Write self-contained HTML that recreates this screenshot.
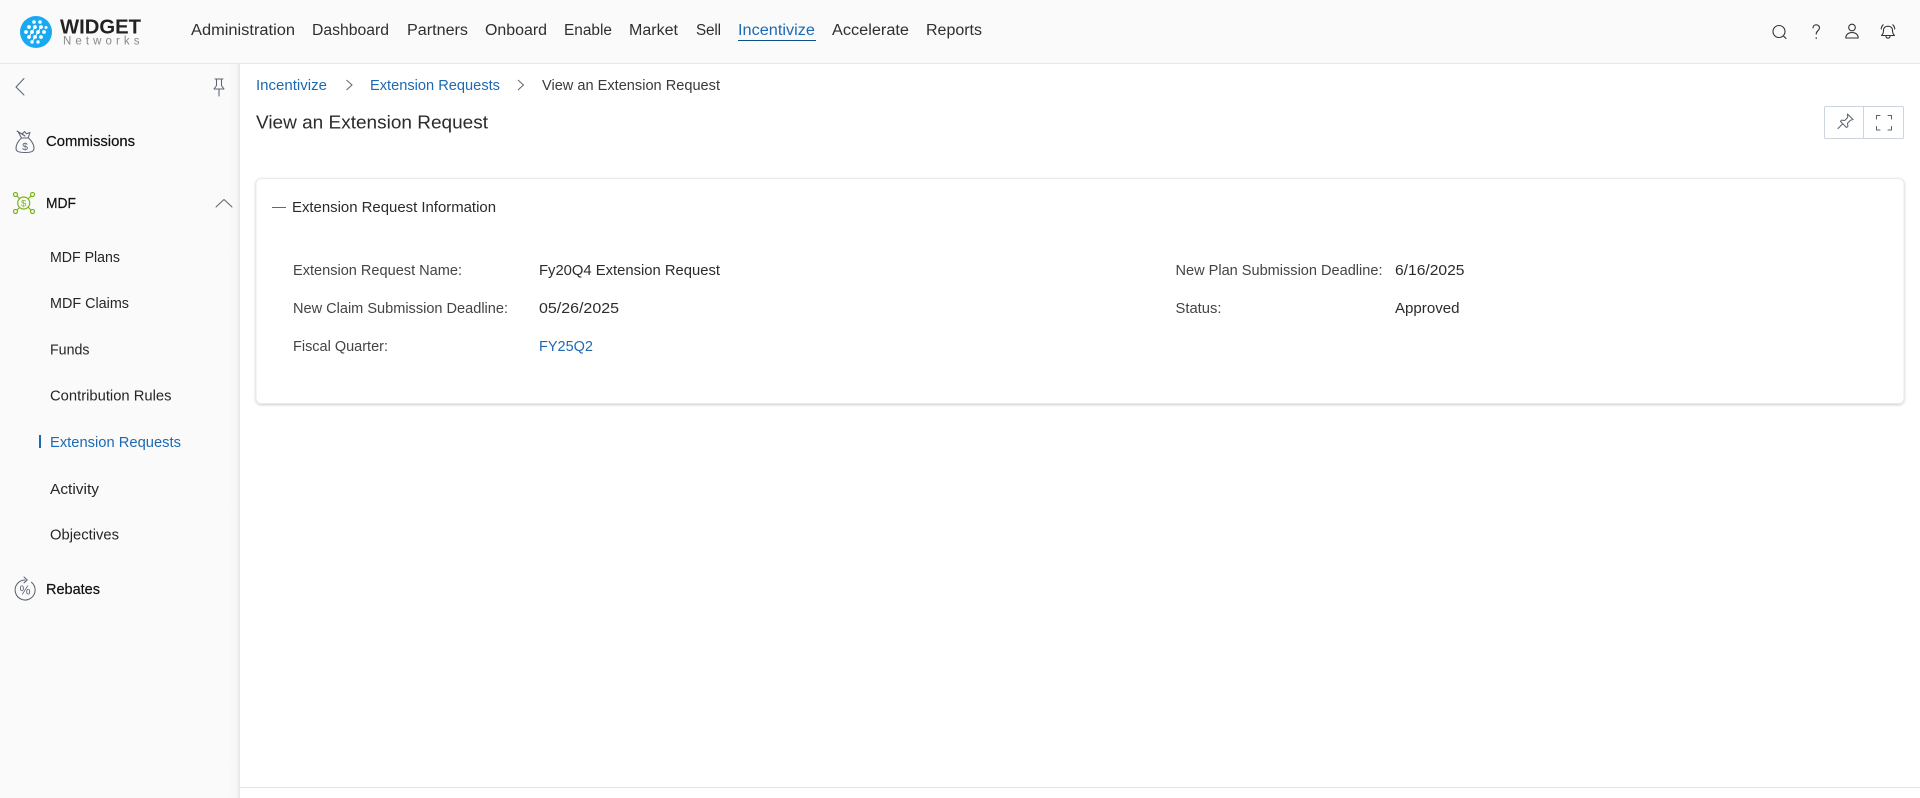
<!DOCTYPE html>
<html lang="en">
<head>
<meta charset="utf-8">
<title>View an Extension Request</title>
<style>
html,body{margin:0;padding:0;width:1920px;height:798px;overflow:hidden;background:#fff}
svg{display:block;position:absolute;left:0;top:0}
text{font-family:"Liberation Sans",Arial,sans-serif;white-space:pre}
.nav{font-size:15.3px;fill:#2f2f2f}
.bc{font-size:14.4px;fill:#3a3a3a}
.link{fill:#1e69b3}
.side{font-size:14.4px;fill:#262626}
.top{font-size:14.4px;fill:#111;stroke:#111;stroke-width:.2}
.lab{font-size:14.4px;fill:#444}
.val{font-size:14.4px;fill:#2b2b2b}
</style>
</head>
<body>
<svg width="1920" height="798" viewBox="0 0 1920 798" xmlns="http://www.w3.org/2000/svg">
<defs>
<linearGradient id="sh" x1="0" x2="1" y1="0" y2="0">
<stop offset="0" stop-color="#fafafa"/><stop offset=".7" stop-color="#f7f7f8"/><stop offset="1" stop-color="#e6e6e9"/>
</linearGradient>
<filter id="cs" x="-2%" y="-5%" width="104%" height="112%"><feDropShadow dx="0" dy="1" stdDeviation="1.200" flood-color="#000" flood-opacity=".2"/></filter>
</defs>
<rect width="1920" height="798" fill="#fff"/>
<rect y="0" width="1920" height="63" fill="#fafafa"/>
<rect y="63" width="1920" height="1" fill="#e2e8f2"/>
<rect y="64" width="240" height="734" fill="#fafafa"/>
<rect x="228" y="64" width="12" height="734" fill="url(#sh)"/>
<rect x="240" y="787" width="1680" height="1" fill="#e3e6e6"/>

<!-- logo -->
<circle cx="36" cy="32" r="16" fill="#19a9f2"/>
<g fill="#fff">
<circle cx="34" cy="22" r="1.800"/><circle cx="40" cy="22" r="1.800"/>
<circle cx="29" cy="27" r="1.900"/><circle cx="35" cy="27" r="1.900"/><circle cx="41" cy="27" r="1.900"/><circle cx="46" cy="27.500" r="1.500"/>
<circle cx="26" cy="32" r="1.900"/><circle cx="32" cy="32" r="1.900"/><circle cx="38" cy="32" r="1.900"/><circle cx="44" cy="32" r="1.900"/>
<circle cx="29" cy="37" r="1.900"/><circle cx="35" cy="37" r="1.900"/><circle cx="41" cy="37" r="1.900"/>
<circle cx="32" cy="42" r="1.700"/><circle cx="38" cy="42" r="1.700"/>
</g>
<g stroke="#fff" stroke-width="1.100" fill="none">
<path d="M29 37L35 27M35 37L41 27M32 42L38 32"/>
</g>
<text x="60" y="33.500" font-size="20" font-weight="700" fill="#222" textLength="81" lengthAdjust="spacingAndGlyphs">WIDGET</text>
<text x="63" y="44.500" font-size="11.500" fill="#8a8a8a" textLength="76.500" lengthAdjust="spacing">Networks</text>

<!-- nav -->
<text class="nav" x="191" y="35" textLength="104" lengthAdjust="spacingAndGlyphs">Administration</text>
<text class="nav" x="312" y="35" textLength="77" lengthAdjust="spacingAndGlyphs">Dashboard</text>
<text class="nav" x="407" y="35" textLength="61" lengthAdjust="spacingAndGlyphs">Partners</text>
<text class="nav" x="485" y="35" textLength="62" lengthAdjust="spacingAndGlyphs">Onboard</text>
<text class="nav" x="564" y="35" textLength="48" lengthAdjust="spacingAndGlyphs">Enable</text>
<text class="nav" x="629" y="35" textLength="49" lengthAdjust="spacingAndGlyphs">Market</text>
<text class="nav" x="696" y="35" textLength="25" lengthAdjust="spacing">Sell</text>
<text class="nav link" x="738" y="35" textLength="77" lengthAdjust="spacingAndGlyphs">Incentivize</text>
<rect x="738" y="40" width="78" height="1" fill="#0b4f86"/>
<text class="nav" x="832" y="35" textLength="77" lengthAdjust="spacingAndGlyphs">Accelerate</text>
<text class="nav" x="926" y="35" textLength="56" lengthAdjust="spacingAndGlyphs">Reports</text>

<!-- header icons -->
<g fill="none" stroke="#333" stroke-width="1.100" stroke-linecap="round" stroke-linejoin="round">
<circle cx="1779" cy="31.500" r="6"/><path d="M1783.500 36L1786 38.500"/>
<path d="M1813 28c0-2 1.400-3.200 3.200-3.200s3.300 1.300 3.300 3c0 2.800-3.300 3-3.300 6.200"/><path d="M1816.200 37.800v.8"/>
<circle cx="1852" cy="27.500" r="3.300"/><path d="M1845.800 38c0-3.600 2.700-5.500 6.200-5.500s6.200 1.900 6.200 5.500z"/>
<path d="M1881.500 35.500c1.500-1.200 2-2.700 2-5 0-2.700 1.900-4.300 4.500-4.300s4.500 1.600 4.500 4.300c0 2.300.5 3.800 2 5zM1885.800 35.500c.2 3.600 4.200 3.600 4.400 0M1881.200 29c.2-1.800.8-3.200 2-4.200M1894.800 29c-.2-1.800-.8-3.200-2-4.200"/>
</g>

<!-- sidebar top icons -->
<g fill="none" stroke="#5a6472" stroke-width="1.050" stroke-linecap="round" stroke-linejoin="round">
<path d="M24 78.500L16 87l8 8"/>
<path d="M215 79h8M216.500 79v6.500L214 89h10l-2.500-3.500V79M219 89v7"/>
<!-- money bag -->
<path d="M21.500 138c-3.500 3-5.500 7-5.500 10 0 3.500 2.500 4.500 9 4.500s9-1 9-4.500c0-3-2-7-5.500-10zM21.500 138l-3-5.500 4 1.300 2-2.300 2 2.300 3.500-1.300-2 5.500M17 131l8 5"/>
<!-- chevron up -->
<path d="M216 207l8-7.500 8 7.500" stroke="#666"/>
<!-- rebates -->
<path d="M25 580A10 10 0 1 0 31.500 582.300M24 577l3.200 3-3.200 2.800"/>
</g>
<text x="25" y="150" font-size="10.500" fill="#5a6472" text-anchor="middle">$</text>
<text x="25" y="594.500" font-size="12.500" fill="#5a6472" text-anchor="middle">%</text>
<!-- MDF icon -->
<g fill="none" stroke="#7ab317" stroke-width="1.200" stroke-linecap="round">
<circle cx="23.700" cy="203" r="6"/>
<circle cx="15.500" cy="194.500" r="2"/><circle cx="32.500" cy="194.500" r="2"/><circle cx="15.500" cy="211.500" r="2"/><circle cx="32.500" cy="211.500" r="2"/>
<path d="M17 196l2.500 2.500M31 196l-2.500 2.500M17 210l2.500-2.500M31 210l-2.500-2.500"/>
</g>
<text x="23.700" y="206.500" font-size="9.500" fill="#7ab317" text-anchor="middle">$</text>

<!-- sidebar text -->
<text class="top" x="46" y="146" textLength="89" lengthAdjust="spacingAndGlyphs">Commissions</text>
<text class="top" x="46" y="208" textLength="30" lengthAdjust="spacingAndGlyphs">MDF</text>
<text class="side" x="50" y="262" textLength="70" lengthAdjust="spacingAndGlyphs">MDF Plans</text>
<text class="side" x="50" y="308" textLength="79" lengthAdjust="spacingAndGlyphs">MDF Claims</text>
<text class="side" x="50" y="354.500" textLength="39.500" lengthAdjust="spacingAndGlyphs">Funds</text>
<text class="side" x="50" y="400.500" textLength="121.500" lengthAdjust="spacingAndGlyphs">Contribution Rules</text>
<rect x="39" y="435" width="2" height="13" fill="#1e69b3"/>
<text class="side link" x="50" y="447" textLength="131" lengthAdjust="spacingAndGlyphs" style="fill:#1e69b3">Extension Requests</text>
<text class="side" x="50" y="494" textLength="49" lengthAdjust="spacingAndGlyphs">Activity</text>
<text class="side" x="50" y="539.500" textLength="69" lengthAdjust="spacingAndGlyphs">Objectives</text>
<text class="top" x="46" y="594" textLength="54" lengthAdjust="spacingAndGlyphs">Rebates</text>

<!-- breadcrumb -->
<text class="bc" x="256" y="90" textLength="71" lengthAdjust="spacingAndGlyphs" style="fill:#1e69b3">Incentivize</text>
<path d="M346.500 80l5.500 5-5.500 5" fill="none" stroke="#666" stroke-width="1"/>
<text class="bc" x="370" y="90" textLength="130" lengthAdjust="spacingAndGlyphs" style="fill:#1e69b3">Extension Requests</text>
<path d="M518 80l5.500 5-5.500 5" fill="none" stroke="#666" stroke-width="1"/>
<text class="bc" x="542" y="90" textLength="178" lengthAdjust="spacingAndGlyphs">View an Extension Request</text>

<!-- title -->
<text x="256" y="128.500" font-size="18.500" fill="#2b2b2b" textLength="232" lengthAdjust="spacingAndGlyphs">View an Extension Request</text>

<!-- buttons -->
<rect x="1824.500" y="106.500" width="79" height="32" rx="1" fill="#fff" stroke="#ccd5df"/>
<path d="M1863.500 106.500v32" stroke="#ccd5df"/>
<g fill="none" stroke="#5a6472" stroke-width="1.050" stroke-linejoin="round" stroke-linecap="round">
<path d="M1847.500 114l5.500 5.500-2.500.8-3 3 .4 3.200-1.400 1-6-6 1-1.400 3.200.4 3-3zM1842.500 124l-4.500 4.500"/>
<path d="M1876.500 119v-3.500h3.500M1888 115.500h3.500v3.500M1891.500 126.500v3.500h-3.500M1880 130h-3.500v-3.500"/>
</g>

<!-- card -->
<rect x="256" y="178.500" width="1648" height="225" rx="5" fill="#fff" stroke="#e8eaed" filter="url(#cs)"/>
<rect x="272" y="207" width="14" height="1" fill="#5a6a80"/>
<text class="val" x="292" y="212" textLength="204" lengthAdjust="spacingAndGlyphs">Extension Request Information</text>

<text class="lab" x="293" y="275" textLength="169" lengthAdjust="spacingAndGlyphs">Extension Request Name:</text>
<text class="lab" x="293" y="313" textLength="215" lengthAdjust="spacingAndGlyphs">New Claim Submission Deadline:</text>
<text class="lab" x="293" y="351" textLength="95" lengthAdjust="spacingAndGlyphs">Fiscal Quarter:</text>
<text class="val" x="539" y="275" textLength="181" lengthAdjust="spacingAndGlyphs">Fy20Q4 Extension Request</text>
<text class="val" x="539" y="313" textLength="80" lengthAdjust="spacingAndGlyphs">05/26/2025</text>
<text class="val" x="539" y="351" textLength="54" lengthAdjust="spacingAndGlyphs" style="fill:#1e69b3">FY25Q2</text>

<text class="lab" x="1175.500" y="275" textLength="207" lengthAdjust="spacingAndGlyphs">New Plan Submission Deadline:</text>
<text class="lab" x="1175.500" y="313" textLength="46" lengthAdjust="spacingAndGlyphs">Status:</text>
<text class="val" x="1395" y="275" textLength="69.500" lengthAdjust="spacingAndGlyphs">6/16/2025</text>
<text class="val" x="1395" y="313" textLength="64.500" lengthAdjust="spacingAndGlyphs">Approved</text>
</svg>
</body>
</html>
